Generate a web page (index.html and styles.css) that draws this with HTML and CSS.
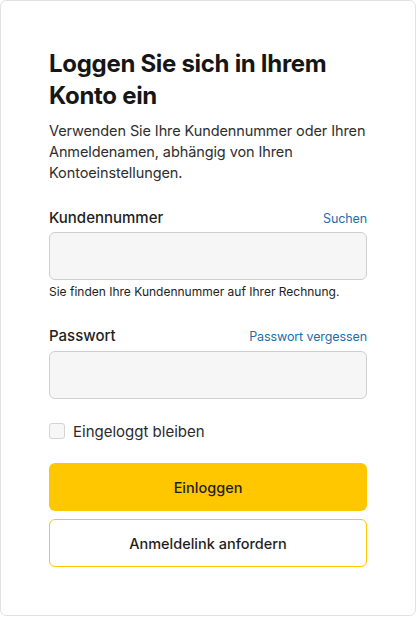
FILE: index.html
```html
<!DOCTYPE html>
<html lang="de">
<head>
<meta charset="utf-8">
<link rel="stylesheet" href="styles.css">
</head>
<body>
<div class="card">
  <h1 class="title">Loggen Sie sich in Ihrem Konto ein</h1>
  <p class="desc">Verwenden Sie Ihre Kundennummer oder Ihren Anmeldenamen, abhängig von Ihren Kontoeinstellungen.</p>

  <div class="field first">
    <div class="label-row">
      <span class="label">Kundennummer</span>
      <a class="link">Suchen</a>
    </div>
    <div class="input"></div>
    <div class="hint">Sie finden Ihre Kundennummer auf Ihrer Rechnung.</div>
  </div>

  <div class="field second">
    <div class="label-row">
      <span class="label">Passwort</span>
      <a class="link">Passwort vergessen</a>
    </div>
    <div class="input"></div>
  </div>

  <div class="check-row">
    <span class="box"></span>
    <span class="check-label">Eingeloggt bleiben</span>
  </div>

  <div class="btn primary">Einloggen</div>
  <div class="btn secondary">Anmeldelink anfordern</div>
</div>
</body>
</html>
```
FILE: styles.css
```css
* { box-sizing: border-box; }
html, body { margin: 0; padding: 0; background: #fff; }
body { font-family: Inter, "Noto Sans", sans-serif; color: #222; }
.card {
  width: 416px;
  height: 616px;
  border: 1px solid #e2e2e2;
  border-radius: 6px;
  padding: 47px 48px 48px 48px;
}
.title {
  margin: 0;
  font-size: 24px;
  line-height: 32px;
  font-weight: 700;
  color: #161616;
  letter-spacing: -0.3px;
}
.desc {
  margin: 8px 0 0 0;
  font-size: 14.5px;
  line-height: 21px;
  color: #2e2e2e;
  letter-spacing: -0.1px;
}
.field.first { margin-top: 25px; }
.field.second { margin-top: 26px; }
.label-row {
  display: flex;
  justify-content: space-between;
  align-items: baseline;
  height: 20px;
  line-height: 20px;
}
.label { font-size: 15px; font-weight: 500; color: #1e1e1e; }
.link { font-size: 12.5px; color: #1c6db0; letter-spacing: -0.1px; }
.input {
  margin-top: 4px;
  height: 48px;
  background: #f6f6f6;
  border: 1px solid #cfcfcf;
  border-radius: 6px;
}
.field.second .input { margin-top: 5px; }
.hint {
  margin-top: 4px;
  font-size: 12px;
  line-height: 16px;
  color: #222;
}
.check-row {
  margin-top: 24px;
  display: flex;
  align-items: center;
  gap: 8px;
  height: 16px;
}
.box {
  width: 16px;
  height: 16px;
  border: 1px solid #d4d4d4;
  background: #f7f7f7;
  border-radius: 3px;
}
.check-label { font-size: 15px; color: #2a2a2a; }
.btn {
  height: 48px;
  border-radius: 6px;
  display: flex;
  align-items: center;
  justify-content: center;
  font-size: 14.5px;
  font-weight: 500;
  color: #1e1e1e;
}
.primary { margin-top: 24px; background: #ffc700; }
.secondary { margin-top: 8px; background: #fff; border: 1px solid #ffc700; }
```
